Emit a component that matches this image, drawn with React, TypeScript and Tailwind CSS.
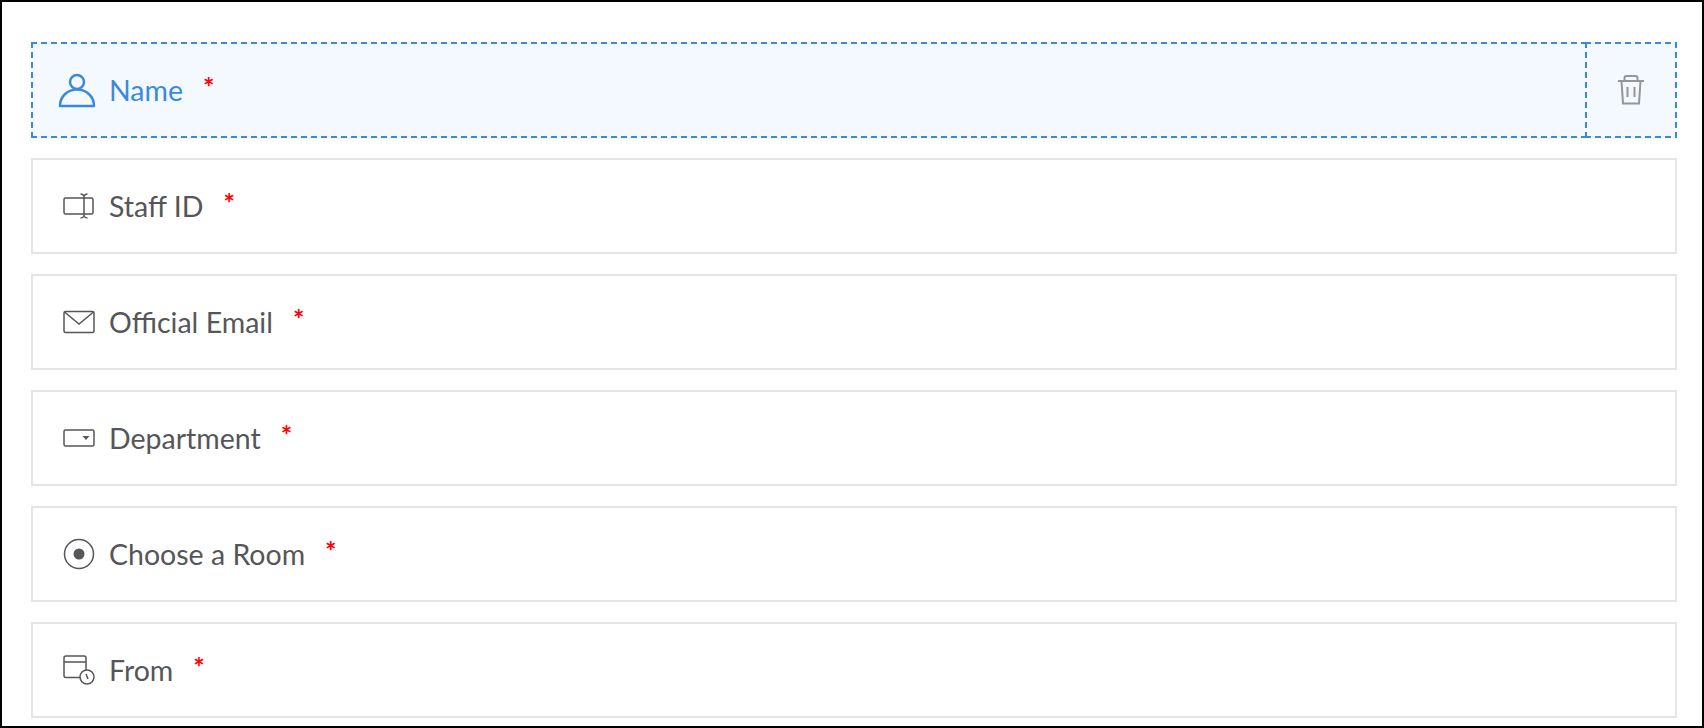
import type { ReactNode } from "react";

function UserIcon() {
  return (
    <svg width="38" height="36" viewBox="0 0 38 36" fill="none" stroke="currentColor" strokeWidth="2.5">
      <path d="M2 34 C2 24 10 17.5 19 17.5 C28 17.5 36 24 36 34 Z" strokeLinejoin="round" />
      <circle cx="19" cy="10" r="7" fill="#f4f9ff" />
    </svg>
  );
}

function TextFieldIcon() {
  return (
    <svg width="32" height="26" viewBox="0 0 32 26" fill="none" stroke="currentColor" strokeWidth="1.5">
      <rect x="1" y="5" width="29" height="16" rx="1.5" />
      <path d="M21 2.5 V24 M17.5 1 Q20 1 21 3 Q22 1 24.5 1 M17.5 25 Q20 25 21 23 Q22 25 24.5 25" />
    </svg>
  );
}

function MailIcon() {
  return (
    <svg width="32" height="24" viewBox="0 0 32 24" fill="none" stroke="currentColor" strokeWidth="1.5">
      <rect x="1" y="1.5" width="30" height="21" rx="1.5" />
      <path d="M1.5 2 L16 14 L30.5 2" />
    </svg>
  );
}

function DropdownIcon() {
  return (
    <svg width="32" height="18" viewBox="0 0 32 18" fill="none" stroke="currentColor" strokeWidth="1.5">
      <rect x="1" y="1" width="30" height="16" rx="1.5" />
      <path d="M19.5 7 H26.5 L23 11 Z" fill="currentColor" stroke="none" />
    </svg>
  );
}

function RadioIcon() {
  return (
    <svg width="32" height="32" viewBox="0 0 32 32" fill="none" stroke="currentColor" strokeWidth="1.5">
      <circle cx="16" cy="16" r="14.5" />
      <circle cx="16" cy="16" r="5.5" fill="currentColor" stroke="none" />
    </svg>
  );
}

function DateTimeIcon() {
  return (
    <svg width="32" height="30" viewBox="0 0 32 30" fill="none" stroke="currentColor" strokeWidth="1.5">
      <path d="M17 22.5 H3 a2 2 0 0 1 -2 -2 V3 a2 2 0 0 1 2 -2 H21 a2 2 0 0 1 2 2 V15 M1 7 H23" />
      <circle cx="24" cy="22" r="7" />
      <path d="M23 19 L25 24" />
    </svg>
  );
}

function TrashIcon() {
  return (
    <svg width="26" height="30" viewBox="0 0 26 30" fill="none" stroke="#979595" strokeWidth="2">
      <path d="M0 6 H26 M6.5 6 V3 a2 2 0 0 1 2 -2 H17.5 a2 2 0 0 1 2 2 V6" />
      <path d="M3.5 6 L5 28.5 H21 L22.5 6" />
      <path d="M9.5 12 V22 M16.5 12 V22" />
    </svg>
  );
}

const fields: { label: string; icon: ReactNode }[] = [
  { label: "Staff ID", icon: <TextFieldIcon /> },
  { label: "Official Email", icon: <MailIcon /> },
  { label: "Department", icon: <DropdownIcon /> },
  { label: "Choose a Room", icon: <RadioIcon /> },
  { label: "From", icon: <DateTimeIcon /> },
];

function Label({ text }: { text: string }) {
  return (
    <span className="flex items-start">
      <span className="text-[28.5px] leading-[32px]">{text}</span>
      <span className="ml-[20px] -mt-[3px] text-[27px] leading-[32px] font-bold text-[#ff0000]">*</span>
    </span>
  );
}

// css dashed comes out too fine here, the reference has 6px dashes with 4px gaps
const dashed =
  "bg-no-repeat [background-image:repeating-linear-gradient(90deg,#3a89df_0_6px,transparent_6px_10px),repeating-linear-gradient(90deg,#3a89df_0_6px,transparent_6px_10px),repeating-linear-gradient(180deg,#3a89df_0_6px,transparent_6px_10px),repeating-linear-gradient(180deg,#3a89df_0_6px,transparent_6px_10px)] [background-size:100%_2px,100%_2px,2px_100%,2px_100%] [background-position:0_0,0_100%,0_0,100%_0]";

export default function App() {
  return (
    <div className="h-[728px] w-[1704px] overflow-hidden border-2 border-black bg-white pt-[40px] pl-[29px] pr-[25px] font-['Lato',sans-serif]">
      <div className="flex flex-col gap-[20px]">
        {/* Selected field */}
        <div className="flex h-[96px] bg-[#f4f9ff] text-[#3a89df]">
          <div className={`flex flex-1 items-center pl-[27px] ${dashed}`}>
            <div className="mr-[13px]">
              <UserIcon />
            </div>
            <Label text="Name" />
          </div>
          <div className={`-ml-[2px] flex w-[92px] items-center justify-center ${dashed}`}>
            <TrashIcon />
          </div>
        </div>

        {fields.map((field) => (
          <div
            key={field.label}
            className="flex h-[96px] items-center border-2 border-[#e5e5e5] pl-[30px] text-[#555659]"
          >
            <div className="mr-[14px] flex w-[32px] justify-center">{field.icon}</div>
            <Label text={field.label} />
          </div>
        ))}
      </div>
    </div>
  );
}
